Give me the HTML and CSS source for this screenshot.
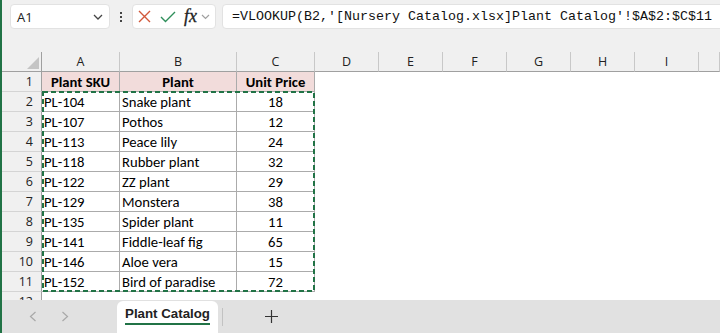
FILE: index.html
```html
<!DOCTYPE html>
<html>
<head>
<meta charset="utf-8">
<title>Plant Catalog</title>
<link rel="stylesheet" href="styles.css">
</head>
<body>
<div class="app">
  <div class="fbar">
    <div class="namebox">
      <span class="nb-text">A1</span>
      <svg class="nb-chev" width="10" height="6" viewBox="0 0 10 6"><polyline points="1,1 5,5 9,1" fill="none" stroke="#444" stroke-width="1.3"/></svg>
    </div>
    <div class="dots"><i></i><i></i><i></i></div>
    <div class="btns">
      <svg class="ic-x" width="13" height="13" viewBox="0 0 13 13"><path d="M1 1 L12 12 M12 1 L1 12" stroke="#d2583a" stroke-width="1.4" fill="none"/></svg>
      <svg class="ic-ok" width="16" height="12" viewBox="0 0 16 12"><polyline points="1,6 5.5,10.5 15,1" fill="none" stroke="#2f8f5b" stroke-width="1.4"/></svg>
      <span class="fx">fx</span>
      <svg class="ic-chev" width="9" height="6" viewBox="0 0 9 6"><polyline points="1,1 4.5,4.5 8,1" fill="none" stroke="#a0a0a0" stroke-width="1.2"/></svg>
    </div>
    <div class="formula">=VLOOKUP(B2,'[Nursery Catalog.xlsx]Plant Catalog'!$A$2:$C$11</div>
  </div>

  <div class="sheet">
    <div class="grid">
      <div class="corner"><span class="tri"></span></div>
      <div class="ch">A</div><div class="ch">B</div><div class="ch">C</div><div class="ch">D</div><div class="ch">E</div><div class="ch">F</div><div class="ch">G</div><div class="ch">H</div><div class="ch">I</div><div class="ch"></div>

      <div class="rh">1</div><div class="c hd">Plant SKU</div><div class="c hd">Plant</div><div class="c hd">Unit Price</div><div class="e"></div><div class="e"></div><div class="e"></div><div class="e"></div><div class="e"></div><div class="e"></div><div class="e"></div>

      <div class="rh">2</div><div class="c">PL-104</div><div class="c">Snake plant</div><div class="c num">18</div><div class="e"></div><div class="e"></div><div class="e"></div><div class="e"></div><div class="e"></div><div class="e"></div><div class="e"></div>

      <div class="rh">3</div><div class="c">PL-107</div><div class="c">Pothos</div><div class="c num">12</div><div class="e"></div><div class="e"></div><div class="e"></div><div class="e"></div><div class="e"></div><div class="e"></div><div class="e"></div>

      <div class="rh">4</div><div class="c">PL-113</div><div class="c">Peace lily</div><div class="c num">24</div><div class="e"></div><div class="e"></div><div class="e"></div><div class="e"></div><div class="e"></div><div class="e"></div><div class="e"></div>

      <div class="rh">5</div><div class="c">PL-118</div><div class="c">Rubber plant</div><div class="c num">32</div><div class="e"></div><div class="e"></div><div class="e"></div><div class="e"></div><div class="e"></div><div class="e"></div><div class="e"></div>

      <div class="rh">6</div><div class="c">PL-122</div><div class="c">ZZ plant</div><div class="c num">29</div><div class="e"></div><div class="e"></div><div class="e"></div><div class="e"></div><div class="e"></div><div class="e"></div><div class="e"></div>

      <div class="rh">7</div><div class="c">PL-129</div><div class="c">Monstera</div><div class="c num">38</div><div class="e"></div><div class="e"></div><div class="e"></div><div class="e"></div><div class="e"></div><div class="e"></div><div class="e"></div>

      <div class="rh">8</div><div class="c">PL-135</div><div class="c">Spider plant</div><div class="c num">11</div><div class="e"></div><div class="e"></div><div class="e"></div><div class="e"></div><div class="e"></div><div class="e"></div><div class="e"></div>

      <div class="rh">9</div><div class="c">PL-141</div><div class="c">Fiddle-leaf fig</div><div class="c num">65</div><div class="e"></div><div class="e"></div><div class="e"></div><div class="e"></div><div class="e"></div><div class="e"></div><div class="e"></div>

      <div class="rh">10</div><div class="c">PL-146</div><div class="c">Aloe vera</div><div class="c num">15</div><div class="e"></div><div class="e"></div><div class="e"></div><div class="e"></div><div class="e"></div><div class="e"></div><div class="e"></div>

      <div class="rh">11</div><div class="c">PL-152</div><div class="c">Bird of paradise</div><div class="c num">72</div><div class="e"></div><div class="e"></div><div class="e"></div><div class="e"></div><div class="e"></div><div class="e"></div><div class="e"></div>

      <div class="rh">12</div><div class="e"></div><div class="e"></div><div class="e"></div><div class="e"></div><div class="e"></div><div class="e"></div><div class="e"></div><div class="e"></div><div class="e"></div><div class="e"></div>
    </div>
    <svg class="ants" width="273" height="201" viewBox="0 0 273 201"><rect x="1" y="1" width="271" height="199" fill="none" stroke="#217346" stroke-width="2" stroke-dasharray="5 3"/></svg>
  </div>

  <div class="tabs">
    <div class="navbtn"><svg width="8" height="11" viewBox="0 0 8 11"><polyline points="6.5,1 1.5,5.5 6.5,10" fill="none" stroke="#a8a8a8" stroke-width="1.2"/></svg></div>
    <div class="navbtn"><svg width="8" height="11" viewBox="0 0 8 11"><polyline points="1.5,1 6.5,5.5 1.5,10" fill="none" stroke="#a8a8a8" stroke-width="1.2"/></svg></div>
    <div class="tab"><span class="tab-label">Plant Catalog</span></div>
    <div class="tabsep"></div>
    <svg class="plus" width="13" height="13" viewBox="0 0 13 13"><path d="M6.5 0 V13 M0 6.5 H13" stroke="#333" stroke-width="1.2" fill="none"/></svg>
  </div>
</div>
</body>
</html>
```

FILE: styles.css
```css
* { box-sizing: border-box; }
html, body { margin: 0; padding: 0; }
body { width: 720px; height: 333px; overflow: hidden; background: #f0f0f0; }

.app {
  width: 720px;
  height: 333px;
  border-left: 2px solid #217346;
  display: flex;
  flex-direction: column;
  overflow: hidden;
  font-family: Carlito, "Liberation Sans", Arial, sans-serif;
}

/* formula bar */
.fbar {
  height: 52px;
  flex: none;
  display: flex;
  align-items: flex-start;
  padding-top: 4px;
  background: #f0f0f0;
}
.namebox {
  margin-left: 8px;
  width: 100px;
  height: 25px;
  background: #fff;
  border: 1px solid #e2e2e2;
  border-radius: 4px;
  display: flex;
  align-items: center;
  padding-left: 6px;
  padding-right: 6px;
}
.nb-text {
  flex: 1;
  font-family: "Open Sans", "Liberation Sans", sans-serif;
  font-size: 13px;
  color: #222;
}
.dots {
  width: 22px;
  height: 25px;
  display: flex;
  flex-direction: column;
  align-items: center;
  justify-content: center;
  gap: 2px;
}
.dots i {
  display: block;
  width: 2px;
  height: 2px;
  background: #444;
}
.btns {
  width: 84px;
  height: 25px;
  background: #fff;
  border: 1px solid #e2e2e2;
  border-radius: 4px;
  display: flex;
  align-items: center;
  padding-left: 5px;
}
.ic-ok { margin-left: 9px; }
.fx {
  margin-left: 8px;
  font-family: "Liberation Serif", "DejaVu Serif", serif;
  font-style: italic;
  font-size: 18px;
  color: #222;
  line-height: 1;
  margin-top: -2px;
  -webkit-text-stroke: 0.3px #222;
}
.ic-chev { margin-left: 4px; }
.formula {
  flex: 1;
  margin-left: 6px;
  margin-right: -6px;
  height: 25px;
  background: #fff;
  border: 1px solid #e2e2e2;
  border-radius: 4px;
  padding-left: 9px;
  font-family: "Liberation Mono", "DejaVu Sans Mono", monospace;
  font-size: 13.33px;
  line-height: 23px;
  color: #111;
  white-space: nowrap;
  overflow: hidden;
}

/* sheet */
.sheet {
  position: relative;
  height: 248px;
  flex: none;
  overflow: hidden;
  background: #fff;
}
.grid {
  display: grid;
  grid-template-columns: 40px 78px 117px 78px repeat(6, 64px) 1fr;
  grid-auto-rows: 20px;
  font-size: 14.67px;
  color: #000;
}
.corner {
  position: relative;
  background: #f0f0f0;
  border-right: 1px solid #a0a0a0;
  border-bottom: 1px solid #a0a0a0;
}
.tri {
  position: absolute;
  right: 2px;
  bottom: 2px;
  width: 0;
  height: 0;
  border-left: 12px solid transparent;
  border-bottom: 12px solid #c4c4c4;
}
.ch {
  background: #f0f0f0;
  border-right: 1px solid #c8c8c8;
  border-bottom: 1px solid #a0a0a0;
  text-align: center;
  font-family: "Open Sans", "Liberation Sans", sans-serif;
  font-size: 12.5px;
  line-height: 19px;
  color: #222;
}
.rh {
  background: #f0f0f0;
  border-right: 1px solid #a0a0a0;
  border-bottom: 1px solid #d4d4d4;
  text-align: right;
  padding-right: 8px;
  font-family: "Open Sans", "Liberation Sans", sans-serif;
  font-size: 12.5px;
  line-height: 19px;
  color: #222;
}
.c {
  border-right: 1px solid #ababab;
  border-bottom: 1px solid #ababab;
  padding-left: 2px;
  line-height: 20px;
  white-space: nowrap;
  overflow: hidden;
}
.hd {
  background: #f2dcdb;
  font-weight: bold;
  text-align: center;
  padding-left: 0;
}
.num { text-align: center; padding-left: 0; }
.e { background: #fff; }

.ants {
  position: absolute;
  left: 40px;
  top: 39px;
}

/* sheet tabs */
.tabs {
  flex: 1;
  background: #e1e1e1;
  display: flex;
  align-items: flex-end;
  padding-left: 15px;
}
.navbtn {
  width: 32px;
  height: 32px;
  display: flex;
  align-items: center;
  justify-content: center;
  padding-bottom: 2px;
}
.tab {
  margin-left: 36px;
  width: 101px;
  height: 32px;
  background: #fff;
  border-radius: 6px 6px 0 0;
  display: flex;
  justify-content: center;
  padding-top: 5px;
}
.tab-label {
  font-family: "Liberation Sans", Arial, sans-serif;
  font-weight: bold;
  font-size: 13.3px;
  color: #222;
  height: 19px;
  line-height: 16px;
  border-bottom: 2.5px solid #217346;
}
.tabsep {
  margin-left: 4px;
  width: 1px;
  height: 18px;
  margin-bottom: 7px;
  background: #c2c2c2;
}
.plus {
  margin-left: 42px;
  margin-bottom: 10px;
}
```
